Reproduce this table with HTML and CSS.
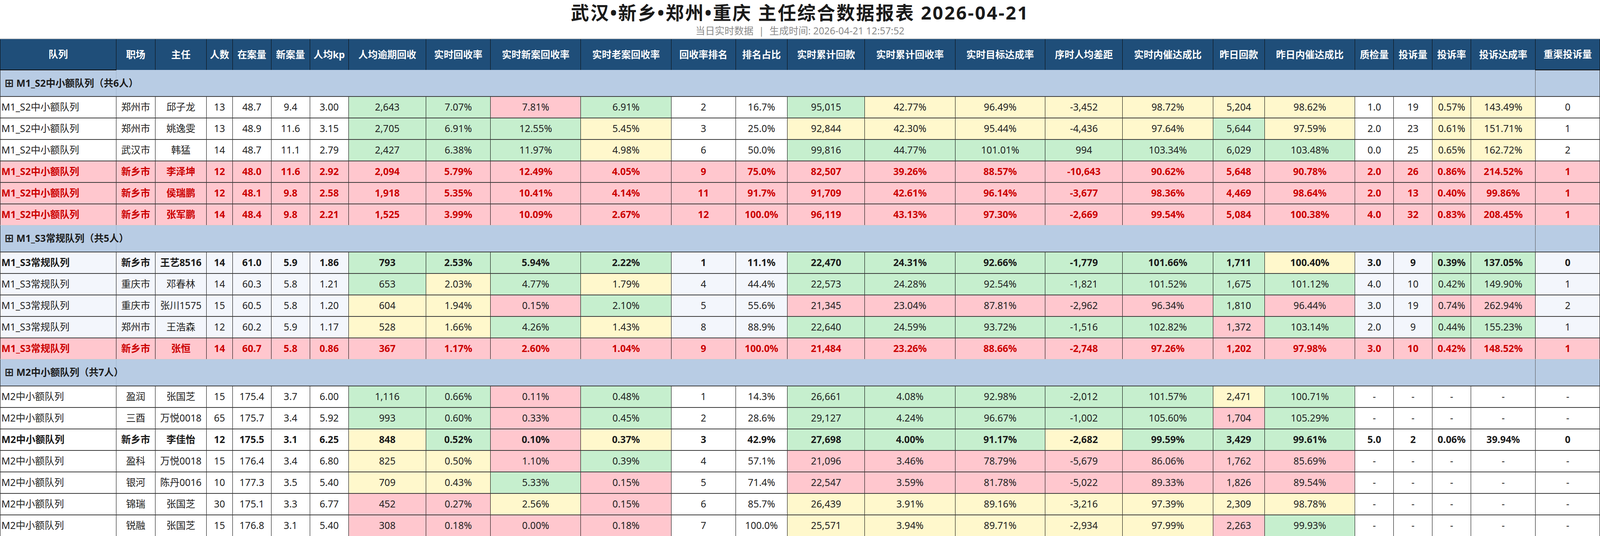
FILE: index.html
```html
<!DOCTYPE html>
<html lang="zh-CN">
<head>
<meta charset="utf-8">
<title>主任综合数据报表</title>
<link rel="stylesheet" href="styles.css">
</head>
<body>
<header class="report-header">
  <h1 class="title">武汉•新乡•郑州•重庆 主任综合数据报表 2026-04-21</h1>
  <div class="subtitle">当日实时数据<span class="sep">|</span>生成时间: 2026-04-21 12:57:52</div>
</header>
<div class="table-wrap">
<table class="tbl">
  <colgroup>
    <col class="c-team"><col class="c-site"><col class="c-lead"><col class="c-xs">
    <col class="c-s"><col class="c-s"><col class="c-s"><col class="c-l">
    <col class="c-mr"><col class="c-xl"><col class="c-xl"><col class="c-mr">
    <col class="c-m"><col class="c-l"><col class="c-xl"><col class="c-xl2">
    <col class="c-l"><col class="c-xl"><col class="c-m"><col class="c-xl">
    <col class="c-s"><col class="c-s"><col class="c-s"><col class="c-mr">
    <col class="c-mr">
  </colgroup>
  <thead>
    <tr class="head">
      <th class="first">队列</th><th>职场</th><th>主任</th><th>人数</th><th>在案量</th><th>新案量</th><th>人均kp</th>
      <th>人均逾期回收</th><th>实时回收率</th><th>实时新案回收率</th><th>实时老案回收率</th><th>回收率排名</th><th>排名占比</th>
      <th>实时累计回款</th><th>实时累计回收率</th><th>实时目标达成率</th><th>序时人均差距</th><th>实时内催达成比</th>
      <th>昨日回款</th><th>昨日内催达成比</th><th>质检量</th><th>投诉量</th><th>投诉率</th><th>投诉达成率</th><th class="last">重渠投诉量</th>
    </tr>
  </thead>
  <tbody>
    <tr class="grp"><td class="gfirst"><span class="gicon">⊞</span> M1_S2中小额队列（共6人）</td><td class="gmid" colspan="23"></td><td class="glast"></td></tr>
    <tr><td class="team">M1_S2中小额队列</td><td>郑州市</td><td>邱子龙</td><td>13</td><td>48.7</td><td>9.4</td><td>3.00</td><td class="g">2,643</td><td class="g">7.07%</td><td class="r">7.81%</td><td class="g">6.91%</td><td>2</td><td>16.7%</td><td class="g">95,015</td><td class="y">42.77%</td><td class="y">96.49%</td><td class="y">-3,452</td><td class="y">98.72%</td><td class="y">5,204</td><td class="y">98.62%</td><td>1.0</td><td>19</td><td class="y">0.57%</td><td class="y">143.49%</td><td class="last">0</td></tr>
    <tr><td class="team">M1_S2中小额队列</td><td>郑州市</td><td>姚逸雯</td><td>13</td><td>48.9</td><td>11.6</td><td>3.15</td><td class="g">2,705</td><td class="g">6.91%</td><td class="g">12.55%</td><td class="y">5.45%</td><td>3</td><td>25.0%</td><td class="y">92,844</td><td class="y">42.30%</td><td class="y">95.44%</td><td class="y">-4,436</td><td class="y">97.64%</td><td class="g">5,644</td><td class="y">97.59%</td><td>2.0</td><td>23</td><td class="y">0.61%</td><td class="y">151.71%</td><td class="last">1</td></tr>
    <tr><td class="team">M1_S2中小额队列</td><td>武汉市</td><td>韩猛</td><td>14</td><td>48.7</td><td>11.1</td><td>2.79</td><td class="g">2,427</td><td class="g">6.38%</td><td class="g">11.97%</td><td class="y">4.98%</td><td>6</td><td>50.0%</td><td class="g">99,816</td><td class="g">44.77%</td><td class="g">101.01%</td><td class="g">994</td><td class="g">103.34%</td><td class="g">6,029</td><td class="g">103.48%</td><td>0.0</td><td>25</td><td class="y">0.65%</td><td class="y">162.72%</td><td class="last">2</td></tr>
    <tr class="bad"><td class="team">M1_S2中小额队列</td><td>新乡市</td><td>李泽坤</td><td>12</td><td>48.0</td><td>11.6</td><td>2.92</td><td>2,094</td><td>5.79%</td><td>12.49%</td><td>4.05%</td><td>9</td><td>75.0%</td><td>82,507</td><td>39.26%</td><td>88.57%</td><td>-10,643</td><td>90.62%</td><td>5,648</td><td>90.78%</td><td>2.0</td><td>26</td><td>0.86%</td><td>214.52%</td><td class="last">1</td></tr>
    <tr class="bad"><td class="team">M1_S2中小额队列</td><td>新乡市</td><td>侯瑞鹏</td><td>12</td><td>48.1</td><td>9.8</td><td>2.58</td><td>1,918</td><td>5.35%</td><td>10.41%</td><td>4.14%</td><td>11</td><td>91.7%</td><td>91,709</td><td>42.61%</td><td>96.14%</td><td>-3,677</td><td>98.36%</td><td>4,469</td><td>98.64%</td><td>2.0</td><td>13</td><td>0.40%</td><td>99.86%</td><td class="last">1</td></tr>
    <tr class="bad"><td class="team">M1_S2中小额队列</td><td>新乡市</td><td>张军鹏</td><td>14</td><td>48.4</td><td>9.8</td><td>2.21</td><td>1,525</td><td>3.99%</td><td>10.09%</td><td>2.67%</td><td>12</td><td>100.0%</td><td>96,119</td><td>43.13%</td><td>97.30%</td><td>-2,669</td><td>99.54%</td><td>5,084</td><td>100.38%</td><td>4.0</td><td>32</td><td>0.83%</td><td>208.45%</td><td class="last">1</td></tr>

    <tr class="grp"><td class="gfirst"><span class="gicon">⊞</span> M1_S3常规队列（共5人）</td><td class="gmid" colspan="23"></td><td class="glast"></td></tr>
    <tr class="pale self"><td class="team">M1_S3常规队列</td><td>新乡市</td><td>王艺8516</td><td>14</td><td>61.0</td><td>5.9</td><td>1.86</td><td class="g">793</td><td class="g">2.53%</td><td class="g">5.94%</td><td class="g">2.22%</td><td>1</td><td>11.1%</td><td class="g">22,470</td><td class="g">24.31%</td><td class="g">92.66%</td><td class="g">-1,779</td><td class="g">101.66%</td><td class="g">1,711</td><td class="y">100.40%</td><td>3.0</td><td>9</td><td class="g">0.39%</td><td class="g">137.05%</td><td class="last">0</td></tr>
    <tr class="pale"><td class="team">M1_S3常规队列</td><td>重庆市</td><td>邓春林</td><td>14</td><td>60.3</td><td>5.8</td><td>1.21</td><td class="g">653</td><td class="y">2.03%</td><td class="g">4.77%</td><td class="y">1.79%</td><td>4</td><td>44.4%</td><td class="g">22,573</td><td class="g">24.28%</td><td class="g">92.54%</td><td class="g">-1,821</td><td class="g">101.52%</td><td class="g">1,675</td><td class="g">101.12%</td><td>4.0</td><td>10</td><td class="g">0.42%</td><td class="g">149.90%</td><td class="last">1</td></tr>
    <tr class="pale"><td class="team">M1_S3常规队列</td><td>重庆市</td><td>张川1575</td><td>15</td><td>60.5</td><td>5.8</td><td>1.20</td><td class="y">604</td><td class="y">1.94%</td><td class="r">0.15%</td><td class="g">2.10%</td><td>5</td><td>55.6%</td><td class="r">21,345</td><td class="r">23.04%</td><td class="r">87.81%</td><td class="r">-2,962</td><td class="r">96.34%</td><td class="g">1,810</td><td class="r">96.44%</td><td>3.0</td><td>19</td><td class="r">0.74%</td><td class="r">262.94%</td><td class="last">2</td></tr>
    <tr class="pale"><td class="team">M1_S3常规队列</td><td>郑州市</td><td>王浩森</td><td>12</td><td>60.2</td><td>5.9</td><td>1.17</td><td class="y">528</td><td class="y">1.66%</td><td class="g">4.26%</td><td class="y">1.43%</td><td>8</td><td>88.9%</td><td class="g">22,640</td><td class="g">24.59%</td><td class="g">93.72%</td><td class="g">-1,516</td><td class="g">102.82%</td><td class="r">1,372</td><td class="g">103.14%</td><td>2.0</td><td>9</td><td class="g">0.44%</td><td class="g">155.23%</td><td class="last">1</td></tr>
    <tr class="bad"><td class="team">M1_S3常规队列</td><td>新乡市</td><td>张恒</td><td>14</td><td>60.7</td><td>5.8</td><td>0.86</td><td>367</td><td>1.17%</td><td>2.60%</td><td>1.04%</td><td>9</td><td>100.0%</td><td>21,484</td><td>23.26%</td><td>88.66%</td><td>-2,748</td><td>97.26%</td><td>1,202</td><td>97.98%</td><td>3.0</td><td>10</td><td>0.42%</td><td>148.52%</td><td class="last">1</td></tr>

    <tr class="grp"><td class="gfirst"><span class="gicon">⊞</span> M2中小额队列（共7人）</td><td class="gmid" colspan="23"></td><td class="glast"></td></tr>
    <tr><td class="team">M2中小额队列</td><td>盈润</td><td>张国芝</td><td>15</td><td>175.4</td><td>3.7</td><td>6.00</td><td class="g">1,116</td><td class="g">0.66%</td><td class="r">0.11%</td><td class="g">0.48%</td><td>1</td><td>14.3%</td><td class="g">26,661</td><td class="g">4.08%</td><td class="g">92.98%</td><td class="g">-2,012</td><td class="g">101.57%</td><td class="y">2,471</td><td class="g">100.71%</td><td>-</td><td>-</td><td>-</td><td>-</td><td class="last">-</td></tr>
    <tr><td class="team">M2中小额队列</td><td>三酉</td><td>万悦0018</td><td>65</td><td>175.7</td><td>3.4</td><td>5.92</td><td class="g">993</td><td class="g">0.60%</td><td class="r">0.33%</td><td class="g">0.45%</td><td>2</td><td>28.6%</td><td class="g">29,127</td><td class="g">4.24%</td><td class="g">96.67%</td><td class="g">-1,002</td><td class="g">105.60%</td><td class="r">1,704</td><td class="g">105.29%</td><td>-</td><td>-</td><td>-</td><td>-</td><td class="last">-</td></tr>
    <tr class="self"><td class="team">M2中小额队列</td><td>新乡市</td><td>李佳怡</td><td>12</td><td>175.5</td><td>3.1</td><td>6.25</td><td class="y">848</td><td class="g">0.52%</td><td class="r">0.10%</td><td class="y">0.37%</td><td>3</td><td>42.9%</td><td class="g">27,698</td><td class="g">4.00%</td><td class="g">91.17%</td><td class="y">-2,682</td><td class="g">99.59%</td><td class="g">3,429</td><td class="g">99.61%</td><td>5.0</td><td>2</td><td>0.06%</td><td>39.94%</td><td class="last">0</td></tr>
    <tr><td class="team">M2中小额队列</td><td>盈科</td><td>万悦0018</td><td>15</td><td>176.4</td><td>3.4</td><td>6.80</td><td class="y">825</td><td class="y">0.50%</td><td class="r">1.10%</td><td class="g">0.39%</td><td>4</td><td>57.1%</td><td class="r">21,096</td><td class="r">3.46%</td><td class="r">78.79%</td><td class="r">-5,679</td><td class="r">86.06%</td><td class="r">1,762</td><td class="r">85.69%</td><td>-</td><td>-</td><td>-</td><td>-</td><td class="last">-</td></tr>
    <tr><td class="team">M2中小额队列</td><td>银河</td><td>陈丹0016</td><td>10</td><td>177.3</td><td>3.5</td><td>5.40</td><td class="y">709</td><td class="y">0.43%</td><td class="g">5.33%</td><td class="r">0.15%</td><td>5</td><td>71.4%</td><td class="r">22,547</td><td class="r">3.59%</td><td class="r">81.78%</td><td class="r">-5,022</td><td class="r">89.33%</td><td class="r">1,826</td><td class="r">89.54%</td><td>-</td><td>-</td><td>-</td><td>-</td><td class="last">-</td></tr>
    <tr><td class="team">M2中小额队列</td><td>锦瑞</td><td>张国芝</td><td>30</td><td>175.1</td><td>3.3</td><td>6.77</td><td class="r">452</td><td class="r">0.27%</td><td class="y">2.56%</td><td class="r">0.15%</td><td>6</td><td>85.7%</td><td class="y">26,439</td><td class="y">3.91%</td><td class="y">89.16%</td><td class="y">-3,216</td><td class="y">97.39%</td><td class="y">2,309</td><td class="y">98.78%</td><td>-</td><td>-</td><td>-</td><td>-</td><td class="last">-</td></tr>
    <tr><td class="team">M2中小额队列</td><td>锐融</td><td>张国芝</td><td>15</td><td>176.8</td><td>3.1</td><td>5.40</td><td class="r">308</td><td class="r">0.18%</td><td class="r">0.00%</td><td class="r">0.18%</td><td>7</td><td>100.0%</td><td class="y">25,571</td><td class="y">3.94%</td><td class="y">89.71%</td><td class="y">-2,934</td><td class="y">97.99%</td><td class="r">2,263</td><td class="g">99.93%</td><td>-</td><td>-</td><td>-</td><td>-</td><td class="last">-</td></tr>
  </tbody>
</table>
</div>
</body>
</html>
```

FILE: styles.css
```css
/* The board fills the window: widths and type follow the frame width,
   heights follow the frame height (frame = 4800 x 1372 units). */
:root {
  --px: calc(100vw / 4800);
  --py: calc(100vh / 1372);
}

* { box-sizing: border-box; }

html, body {
  margin: 0;
  padding: 0;
  background: #ffffff;
  overflow: hidden;
}

body {
  font-family: "Noto Sans", "Noto Sans CJK SC", sans-serif;
  color: #222222;
}

.report-header {
  text-align: center;
}

.title {
  margin: 0;
  padding-top: calc(1 * var(--py));
  height: calc(64 * var(--py));
  font-size: calc(55 * var(--px));
  line-height: calc(63 * var(--py));
  font-weight: 700;
  color: #1a1a1a;
  letter-spacing: calc(3.8 * var(--px));
}

.subtitle {
  height: calc(34 * var(--py));
  font-size: calc(29 * var(--px));
  line-height: calc(30 * var(--py));
  color: #8a8a8a;
}

.subtitle .sep {
  margin: 0 calc(16 * var(--px));
}

.table-wrap {
  border-top: calc(2 * var(--py)) solid #d4d4d4;
}

.tbl {
  border-collapse: collapse;
  table-layout: fixed;
  width: calc(4800 * var(--px));
  font-size: calc(29 * var(--px));
}

/* column widths */
.c-team { width: calc(348 * var(--px)); }
.c-site { width: calc(117 * var(--px)); }
.c-lead { width: calc(154 * var(--px)); }
.c-xs   { width: calc(78 * var(--px)); }
.c-s    { width: calc(116 * var(--px)); }
.c-m    { width: calc(155 * var(--px)); }
.c-mr   { width: calc(193.5 * var(--px)); }
.c-l    { width: calc(232.5 * var(--px)); }
.c-xl   { width: calc(271 * var(--px)); }
.c-xl2  { width: calc(270 * var(--px)); }

.tbl th,
.tbl td {
  padding: 0 calc(3 * var(--px));
  text-align: center;
  vertical-align: middle;
  white-space: nowrap;
  line-height: 1.2;
}

/* header */
.tbl tr.head { height: calc(78 * var(--py)); }

.tbl th {
  background: #1f4e79;
  color: #ffffff;
  font-weight: 700;
  border-left: 1px solid #0d0d0d;
  border-right: 1px solid #0d0d0d;
  border-top: 1px solid #1f4e79;
  border-bottom: 0;
}

.tbl th.first,
.tbl th.last {
  border-bottom: 2px solid #111111;
}

/* group rows */
.tbl tr.grp { height: calc(68 * var(--py)); }

.tbl tr.grp td {
  background: #b8cce4;
  border-top: 0;
  border-bottom: 1px solid #8d9fb8;
}

.tbl td.gfirst {
  text-align: left;
  padding-left: calc(13 * var(--px));
  font-weight: 700;
  color: #1c1c1c;
  overflow: visible;
  border-top: 2px solid #1a1a1a;
  border-left: 1px solid #1a1a1a;
  border-right: 1px solid #9eb1ca;
}

.tbl td.gmid {
  border-left: 1px solid #9eb1ca;
  border-right: 1px solid #555555;
}

.tbl td.glast {
  border-top: 2px solid #1a1a1a;
  border-left: 1px solid #555555;
  border-right: 1px solid #1a1a1a;
}

.gicon {
  font-family: "DejaVu Sans", sans-serif;
  font-weight: 700;
  font-size: 1.12em;
  line-height: 1;
}

/* data rows */
.tbl tbody tr { height: calc(55 * var(--py)); }

.tbl tbody tr:not(.grp) td {
  background: #ffffff;
  border-top: 2px solid #3a3a3a;
  border-bottom: 1px solid #c9c9c9;
  border-left: 1px solid #000000;
  border-right: 1px solid #000000;
  color: #222222;
}

.tbl td.team {
  text-align: left;
  padding-left: calc(3 * var(--px));
}

.tbl tbody tr.pale td { background: #f3f6fc; }

.tbl tbody tr.self td { font-weight: 700; color: #1a1a1a; }

.tbl tbody tr td.g { background: #c6efce; }
.tbl tbody tr td.y { background: #fff8cc; }
.tbl tbody tr td.r { background: #ffc7ce; }

.tbl tbody tr.bad td {
  background: #ffc7ce;
  color: #cc0000;
  font-weight: 700;
}
```
